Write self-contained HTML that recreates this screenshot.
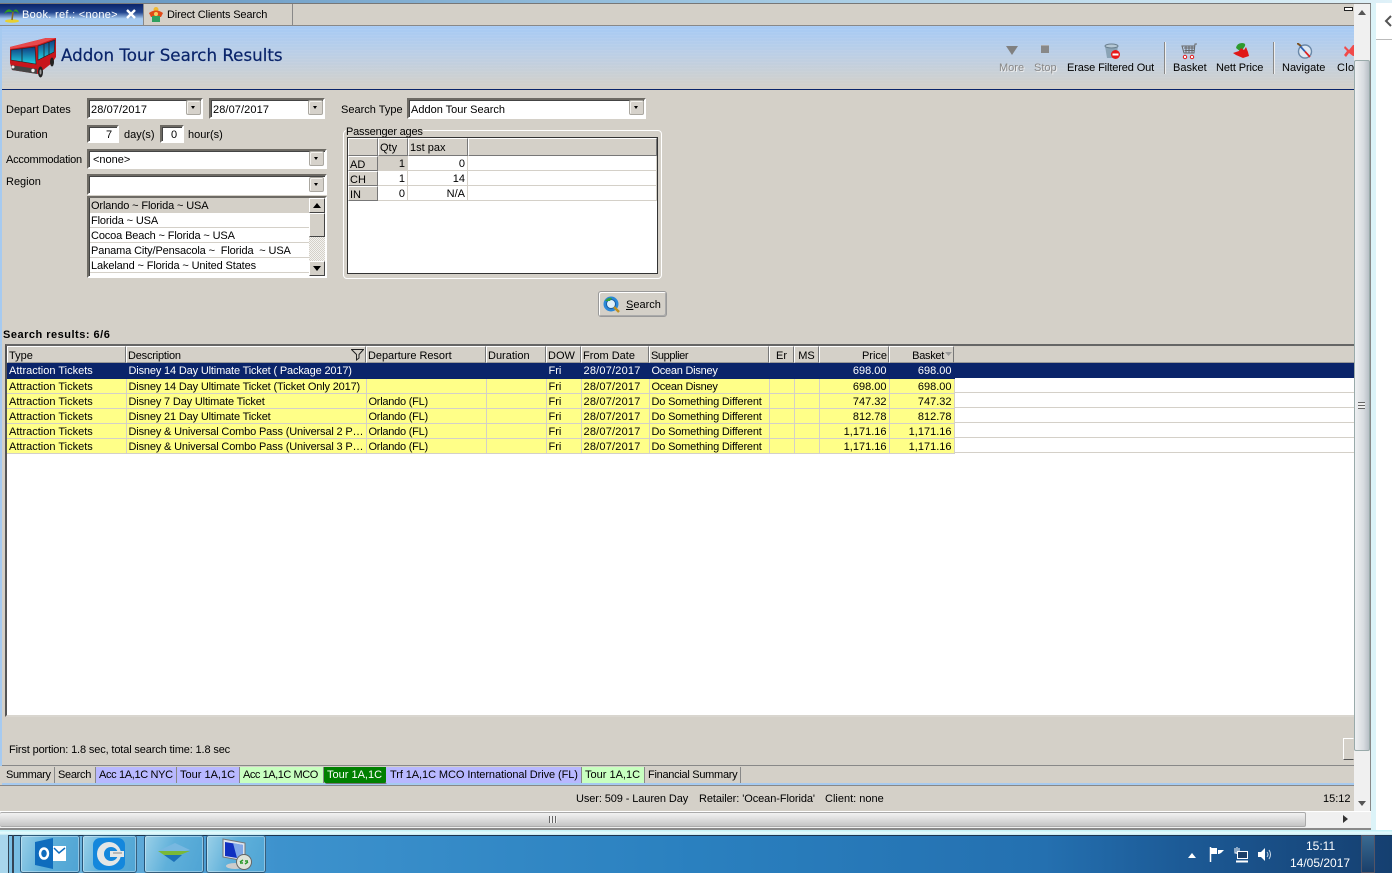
<!DOCTYPE html>
<html><head><meta charset="utf-8"><style>
html,body{margin:0;padding:0;width:1392px;height:873px;overflow:hidden;background:#fff}
*{box-sizing:border-box}
body{position:relative;font:11px/13px "Liberation Sans",sans-serif;color:#000}
.a{position:absolute}
.t{position:absolute;white-space:nowrap;font:11px/17px "Liberation Sans",sans-serif;color:#000}
.f{position:absolute;background:#fff;border:2px solid;border-color:#6d6a64 #fff #fff #6d6a64;box-shadow:inset 1px 1px 0 #444}
.b{position:absolute;width:15px;height:15px;background:#d6d2cb;border:1px solid #aaa7a0;border-radius:2px;box-shadow:inset 1px 1px 0 #f4f2ee}
.b:after{content:"";position:absolute;left:4px;top:5px;border:2.500px solid transparent;border-top:3px solid #000;border-bottom:0}
.g{color:#888;text-shadow:1px 1px 0 #eee}
table{border-collapse:collapse;table-layout:fixed;position:absolute}
td{padding:2px 2px 0;height:15px;border-right:1px solid #d4d0c8;border-bottom:1px solid #d4d0c8;white-space:nowrap;overflow:hidden;font:11px/12px "Liberation Sans",sans-serif;background:#ffff88}
td.r,.hc.r{text-align:right}
td.d{letter-spacing:-.16px}
td.o{letter-spacing:-.25px}
td.m{letter-spacing:.2px}
td.s1{letter-spacing:-.25px}
td.s2{letter-spacing:-.18px}
tr.s td{background:#0a246a;color:#fff;border-color:#0a246a;padding-top:3px;line-height:11px}
.hc{position:absolute;top:346px;height:17px;background:#d4d0c8;border:1px solid;border-color:#fff #777 #999 #fff;padding:3px 1px 0 1px;white-space:nowrap;line-height:13px;font-size:11px}
.ph{position:absolute;background:#d4d0c8;border:1px solid;border-color:#fff #777 #777 #fff;padding:2px 0 0 1px;line-height:13px}
.ph.h{padding-top:3px}
.pc{position:absolute;height:15px;background:#fff;border-right:1px solid #d4d0c8;border-bottom:1px solid #d4d0c8;text-align:right;padding-right:2px;line-height:16px}
.li{position:absolute;left:90px;width:219px;height:15px;border-bottom:1px solid #d4d0c8;padding-left:1px;line-height:16px;background:#fff;white-space:nowrap;overflow:hidden;letter-spacing:-.13px}
.tb{position:absolute;top:767px;height:16px;border-right:1px solid #888;padding:0 0 0 2px;line-height:16px;white-space:nowrap}
.sb{position:absolute;background:#d4d0c8;border:1px solid;border-color:#fff #444 #444 #fff;}
.tk{position:absolute;top:835px;height:38px;border:1px solid rgba(20,50,80,.7);border-radius:3px;box-shadow:inset 0 0 0 1px rgba(255,255,255,.35);background:linear-gradient(110deg,#9ad0e8,#5fb0da 45%,#4fa4d4)}
</style></head><body>

<!-- window chrome -->
<div class="a" style="left:0;top:0;width:1392px;height:3px;background:linear-gradient(90deg,#5d8fbd,#9cc4e0 50%,#dff1f8)"></div>
<div class="a" style="left:0;top:3px;width:1371px;height:1px;background:#777"></div>
<div class="a" style="left:1371px;top:3px;width:5px;height:830px;background:#dcf3f8"></div>
<div class="a" style="left:1376px;top:39px;width:16px;height:1px;background:#bbb"></div>
<svg class="a" style="left:1384px;top:14px" width="8" height="14"><path d="M7 2 L2 7 L7 12" fill="none" stroke="#555" stroke-width="2"/></svg>

<!-- main bg -->
<div class="a" style="left:0;top:4px;width:1354px;height:808px;background:#d4d0c8"></div>
<div class="a" style="left:0;top:26px;width:2px;height:740px;background:#a6caf0"></div>

<!-- tabs -->
<div class="a" style="left:0;top:4px;width:143px;height:21px;background:linear-gradient(180deg,#0a246a 0,#23468f 40%,#a6caf0 70%,#a6caf0 100%)"></div>
<div class="a" style="left:143px;top:4px;width:150px;height:22px;border:1px solid #888;border-top:0;border-bottom:0;background:#d4d0c8"></div>
<div class="a" style="left:0;top:25px;width:1354px;height:1px;background:#888"></div>
<div class="t" style="left:22px;top:7px;color:#fff;letter-spacing:.3px">Book. ref.: &lt;none&gt;</div>
<svg class="a" style="left:3px;top:6px" width="17" height="17"><ellipse cx="9" cy="15" rx="7" ry="1.8" fill="#e8d030"/><path d="M9 14 L10 6" stroke="#8a6a20" stroke-width="1.5"/><path d="M10 6 C6 1 3 4 1 8 C4 5 7 6 10 6 C12 2 15 3 16 8 C14 5 12 5 10 6" fill="#2f9a20"/></svg>
<svg class="a" style="left:126px;top:9px" width="10" height="10"><path d="M1 1 L9 9 M9 1 L1 9" stroke="#fff" stroke-width="2.4"/></svg>
<svg class="a" style="left:148px;top:6px" width="16" height="17"><circle cx="8" cy="3.5" r="2.5" fill="#f0b830"/><path d="M1 7 Q8 2 15 7 L13 11 H3 Z" fill="#e04a18"/><rect x="4" y="10" width="8" height="6" fill="#2fa060"/><circle cx="8" cy="8" r="2" fill="#f5d060"/></svg>
<div class="t" style="left:167px;top:7px;letter-spacing:-.15px">Direct Clients Search</div>
<div class="a" style="left:1344px;top:7px;width:9px;height:4px;border:1px solid #222;background:#fff"></div>

<!-- header -->
<div class="a" style="left:2px;top:26px;width:1352px;height:63px;background:repeating-linear-gradient(180deg,rgba(255,255,255,.05) 0 1px,rgba(0,0,0,0) 1px 3px),linear-gradient(180deg,#a6caf5 0,#bccfe6 45%,#d4d0c8 100%)"></div>
<div class="a" style="left:2px;top:89px;width:1352px;height:1px;background:#0a246a"></div>
<svg class="a" style="left:8px;top:37px" width="50" height="41" viewBox="0 0 50 41">
<defs><linearGradient id="w" x1="0" y1="0" x2="0" y2="1"><stop offset="0" stop-color="#103a80"/><stop offset="1" stop-color="#20d0e0"/></linearGradient></defs>
<path d="M2 10 L38 1 L48 1 L48 20 L44 26 L30 37 L4 33 L2 26 Z" fill="#c8161c"/>
<path d="M2 10 L38 1 L48 1 L29 8 L2 12 Z" fill="#e84a4c"/>
<path d="M3 13 L27 10 L28 27 L3 23 Z" fill="url(#w)" stroke="#222" stroke-width=".6"/>
<path d="M30 9 L47 3 L46 15 L30 23 Z" fill="url(#w)" stroke="#222" stroke-width=".6"/>
<path d="M14 11.500 V25 M36 7 V20 M41 5 V18" stroke="#222" stroke-width=".8"/>
<path d="M3 28 L29 32 L29 37 L4 33 Z" fill="#444"/>
<circle cx="5" cy="30" r="1.500" fill="#eee"/><circle cx="25" cy="33.500" r="1.700" fill="#eee"/>
<ellipse cx="32.500" cy="35" rx="2.500" ry="5.500" fill="#222"/><ellipse cx="32.500" cy="35" rx="1" ry="2.500" fill="#999"/>
<ellipse cx="44" cy="25" rx="2" ry="4.500" fill="#222"/>
</svg>
<div class="t" style="left:61px;top:45px;font:16.7px/21px 'DejaVu Sans',sans-serif;color:#0a246a;-webkit-text-stroke:.2px #0a246a">Addon Tour Search Results</div>

<!-- toolbar -->
<svg class="a" style="left:1006px;top:45px" width="12" height="11"><path d="M0 1 H12 L6 10 Z" fill="#808080"/></svg>
<div class="a" style="left:1041px;top:45px;width:8px;height:8px;background:#888;border-top:1px solid #aaa"></div>
<svg class="a" style="left:1104px;top:43px" width="18" height="17"><path d="M1 3 L3 15 H12 L14 3 Z" fill="#8aa3b5"/><ellipse cx="7.5" cy="3" rx="6.5" ry="2" fill="#b5c8d5" stroke="#6b8090"/><circle cx="11.5" cy="11.5" r="4.5" fill="#e81818"/><rect x="8.5" y="10.5" width="6" height="2" fill="#fff"/></svg>
<div class="t g" style="left:999px;top:60px">More</div>
<div class="t g" style="left:1034px;top:60px">Stop</div>
<div class="t" style="left:1067px;top:60px;letter-spacing:-.12px">Erase Filtered Out</div>
<div class="a" style="left:1164px;top:42px;width:2px;height:32px;background:#888;border-right:1px solid #eee"></div>
<svg class="a" style="left:1181px;top:43px" width="17" height="17"><path d="M16 1 H14 L13 10 H3 L1 3 H14 M3 5 H14 M3.5 7.5 H13 M5 3 V10 M8 3 V10 M11 3 V10" fill="none" stroke="#666"/><circle cx="4" cy="14" r="1.7" fill="#fff" stroke="#e01818"/><circle cx="11" cy="14" r="1.7" fill="#fff" stroke="#e01818"/></svg>
<div class="t" style="left:1173px;top:60px">Basket</div>
<svg class="a" style="left:1233px;top:43px" width="17" height="16"><path d="M3 5 Q4 0 9 0 Q13 0 12 3 L8 9 Z" fill="#2e9a2e"/><path d="M0 10 L6 8 L8 5 L11 7 L13 4 L15 9 L16 13 L10 15 L3 12 Z" fill="#e01818"/></svg>
<div class="t" style="left:1216px;top:60px;letter-spacing:-.1px">Nett Price</div>
<div class="a" style="left:1273px;top:42px;width:2px;height:32px;background:#888;border-right:1px solid #eee"></div>
<svg class="a" style="left:1297px;top:43px" width="16" height="17"><circle cx="8" cy="8.5" r="6.500" fill="#dfe8f2" stroke="#6a88a8" stroke-width="1.4"/><path d="M3 3 L8 8.500" stroke="#3060b0" stroke-width="1.700"/><path d="M8 8.500 L13 14" stroke="#e02020" stroke-width="1.700"/><path d="M0 0 L4 3" stroke="#7a5020" stroke-width="2"/></svg>
<div class="t" style="left:1282px;top:60px">Navigate</div>
<svg class="a" style="left:1344px;top:44px" width="10" height="14"><path d="M1 2 L5 6 L9 1 L10 1 V12 L9 12 L5 9 L2 13 L0 11 L3 7 L0 4 Z" fill="#f04a4a"/></svg>
<div class="t" style="left:1337px;top:60px;width:17px;overflow:hidden;letter-spacing:.3px">Close</div>

<!-- form -->
<div class="t" style="left:6px;top:102px">Depart Dates</div>
<div class="f" style="left:87px;top:98px;width:116px;height:21px"></div><div class="t" style="left:91px;top:102px;letter-spacing:.1px">28/07/2017</div><div class="b" style="left:186px;top:100px"></div>
<div class="f" style="left:209px;top:98px;width:116px;height:21px"></div><div class="t" style="left:213px;top:102px;letter-spacing:.1px">28/07/2017</div><div class="b" style="left:308px;top:100px"></div>
<div class="t" style="left:341px;top:102px">Search Type</div>
<div class="f" style="left:407px;top:98px;width:239px;height:21px"></div><div class="t" style="left:411px;top:102px">Addon Tour Search</div><div class="b" style="left:629px;top:100px"></div>

<div class="t" style="left:6px;top:127px">Duration</div>
<div class="f" style="left:87px;top:125px;width:32px;height:18px"></div><div class="t" style="left:106px;top:127px">7</div>
<div class="t" style="left:124px;top:127px">day(s)</div>
<div class="f" style="left:160px;top:125px;width:24px;height:18px"></div><div class="t" style="left:171px;top:127px">0</div>
<div class="t" style="left:188px;top:127px">hour(s)</div>

<div class="t" style="left:6px;top:152px;letter-spacing:-.23px">Accommodation</div>
<div class="f" style="left:87px;top:149px;width:240px;height:20px"></div><div class="t" style="left:93px;top:152px">&lt;none&gt;</div><div class="b" style="left:309px;top:151px"></div>
<div class="t" style="left:6px;top:174px">Region</div>
<div class="f" style="left:87px;top:174px;width:240px;height:21px"></div><div class="b" style="left:309px;top:177px"></div>

<div class="f" style="left:87px;top:196px;width:240px;height:82px"></div>
<div class="li" style="top:198px;background:#d4d0c8">Orlando ~ Florida ~ USA</div>
<div class="li" style="top:213px">Florida ~ USA</div>
<div class="li" style="top:228px">Cocoa Beach ~ Florida ~ USA</div>
<div class="li" style="top:243px">Panama City/Pensacola ~&nbsp; Florida&nbsp; ~ USA</div>
<div class="li" style="top:258px">Lakeland ~ Florida ~ United States</div>
<div class="li" style="top:273px;height:3px;border:0">Kissimmee ~ Florida ~ USA</div>
<div class="a" style="left:309px;top:198px;width:16px;height:78px;background:repeating-conic-gradient(#d4d0c8 0 25%,#f4f3f0 0 50%) 0 0/2px 2px"></div>
<div class="sb" style="left:309px;top:198px;width:16px;height:15px"></div>
<svg class="a" style="left:313px;top:203px" width="9" height="5"><path d="M0 5 H8 L4 0 Z"/></svg>
<div class="sb" style="left:309px;top:213px;width:16px;height:24px"></div>
<div class="sb" style="left:309px;top:261px;width:16px;height:15px"></div>
<svg class="a" style="left:313px;top:266px" width="9" height="5"><path d="M0 0 H8 L4 5 Z"/></svg>

<!-- passenger group -->
<div class="a" style="left:343px;top:130px;width:319px;height:149px;border:1px solid #fff;border-radius:4px"></div>
<div class="t" style="left:346px;top:124px;background:#d4d0c8;height:13px;line-height:17px;overflow:hidden;letter-spacing:-.2px">Passenger ages</div>
<div class="a" style="left:347px;top:137px;width:311px;height:137px;background:#fff;border:1px solid #333"></div>
<div class="a" style="left:348px;top:138px;width:309px;height:18px;background:#d4d0c8"></div>
<div class="ph" style="left:348px;top:138px;width:30px;height:18px"></div>
<div class="ph h" style="left:378px;top:138px;width:30px;height:18px">Qty</div>
<div class="ph h" style="left:408px;top:138px;width:60px;height:18px">1st pax</div>
<div class="ph" style="left:468px;top:138px;width:189px;height:18px"></div>
<div class="ph" style="left:348px;top:156px;width:30px;height:15px">AD</div>
<div class="ph" style="left:348px;top:171px;width:30px;height:15px">CH</div>
<div class="ph" style="left:348px;top:186px;width:30px;height:15px">IN</div>
<div class="pc" style="left:378px;top:156px;width:30px;background:#d4d0c8">1</div>
<div class="pc" style="left:408px;top:156px;width:60px">0</div>
<div class="pc" style="left:468px;top:156px;width:189px"></div>
<div class="pc" style="left:378px;top:171px;width:30px">1</div>
<div class="pc" style="left:408px;top:171px;width:60px">14</div>
<div class="pc" style="left:468px;top:171px;width:189px"></div>
<div class="pc" style="left:378px;top:186px;width:30px">0</div>
<div class="pc" style="left:408px;top:186px;width:60px">N/A</div>
<div class="pc" style="left:468px;top:186px;width:189px"></div>

<!-- search button -->
<div class="a" style="left:598px;top:291px;width:69px;height:26px;background:#d4d0c8;border:1px solid #999;border-radius:3px;box-shadow:inset 1px 1px 0 #fff,inset -1px -1px 0 #aaa"></div>
<svg class="a" style="left:603px;top:296px" width="19" height="18"><circle cx="8" cy="8" r="7.5" fill="#2a88d8"/><circle cx="8" cy="8" r="4.5" fill="#dff0fa" stroke="#1a5aa0"/><path d="M11 11 L16 16" stroke="#c09020" stroke-width="2.5"/><path d="M2 5 Q5 1 9 2 L7 5 Z" fill="#30a040"/></svg>
<div class="t" style="left:626px;top:297px"><u>S</u>earch</div>

<!-- results -->
<div class="t" style="left:3px;top:327px;font-weight:bold;letter-spacing:.5px">Search results: 6/6</div>
<div class="a" style="left:5px;top:344px;width:1349px;height:373px;background:#fff;border-left:2px solid #555;border-top:2px solid #666;border-bottom:2px solid #d9d6cf"></div>
<div class="a" style="left:7px;top:346px;width:1347px;height:17px;background:#d4d0c8;border-bottom:1px solid #999"></div>
<div class="hc" style="left:7px;width:119px">Type</div>
<div class="hc" style="left:126px;width:240px;letter-spacing:-.2px">Description</div>
<svg class="a" style="left:351px;top:349px" width="13" height="12"><path d="M.5 .5 H12.5 L8 5.5 V9 L5.5 11 V5.5 Z" fill="none" stroke="#222"/></svg>
<div class="hc" style="left:366px;width:120px;padding-left:1px;letter-spacing:-.05px">Departure Resort</div>
<div class="hc" style="left:486px;width:60px">Duration</div>
<div class="hc" style="left:546px;width:35px">DOW</div>
<div class="hc" style="left:581px;width:68px">From Date</div>
<div class="hc" style="left:649px;width:120px;padding-left:1px;letter-spacing:-.4px">Supplier</div>
<div class="hc" style="left:769px;width:25px;text-align:center">Er</div>
<div class="hc" style="left:794px;width:25px;text-align:center">MS</div>
<div class="hc r" style="left:819px;width:70px">Price</div>
<div class="hc" style="left:889px;width:65px;text-align:right;padding-right:9px;letter-spacing:-.3px">Basket</div>
<svg class="a" style="left:945px;top:352px" width="7" height="4"><path d="M0 0 H7 L3.5 4 Z" fill="#999"/></svg>

<table style="left:7px;top:363px;width:947px">
<colgroup><col style="width:119px"><col style="width:240px"><col style="width:120px"><col style="width:60px"><col style="width:35px"><col style="width:68px"><col style="width:120px"><col style="width:25px"><col style="width:25px"><col style="width:70px"><col style="width:65px"></colgroup>
<tr class="s"><td>Attraction Tickets</td><td class="d">Disney 14 Day Ultimate Ticket ( Package 2017)</td><td></td><td></td><td>Fri</td><td class="m">28/07/2017</td><td class="s1">Ocean Disney</td><td></td><td></td><td class="r">698.00</td><td class="r">698.00</td></tr>
<tr><td>Attraction Tickets</td><td class="d">Disney 14 Day Ultimate Ticket (Ticket Only 2017)</td><td></td><td></td><td>Fri</td><td class="m">28/07/2017</td><td class="s1">Ocean Disney</td><td></td><td></td><td class="r">698.00</td><td class="r">698.00</td></tr>
<tr><td>Attraction Tickets</td><td class="d">Disney 7 Day Ultimate Ticket</td><td class="o">Orlando (FL)</td><td></td><td>Fri</td><td class="m">28/07/2017</td><td class="s2">Do Something Different</td><td></td><td></td><td class="r">747.32</td><td class="r">747.32</td></tr>
<tr><td>Attraction Tickets</td><td class="d">Disney 21 Day Ultimate Ticket</td><td class="o">Orlando (FL)</td><td></td><td>Fri</td><td class="m">28/07/2017</td><td class="s2">Do Something Different</td><td></td><td></td><td class="r">812.78</td><td class="r">812.78</td></tr>
<tr><td>Attraction Tickets</td><td class="d">Disney &amp; Universal Combo Pass (Universal 2 P…</td><td class="o">Orlando (FL)</td><td></td><td>Fri</td><td class="m">28/07/2017</td><td class="s2">Do Something Different</td><td></td><td></td><td class="r">1,171.16</td><td class="r">1,171.16</td></tr>
<tr><td>Attraction Tickets</td><td class="d">Disney &amp; Universal Combo Pass (Universal 3 P…</td><td class="o">Orlando (FL)</td><td></td><td>Fri</td><td class="m">28/07/2017</td><td class="s2">Do Something Different</td><td></td><td></td><td class="r">1,171.16</td><td class="r">1,171.16</td></tr>
</table>
<div class="a" style="left:954px;top:363px;width:400px;height:15px;background:#0a246a"></div>
<div class="a" style="left:954px;top:378px;width:400px;height:76px;background:repeating-linear-gradient(180deg,transparent 0 14px,#d4d0c8 14px 15px)"></div>

<div class="t" style="left:9px;top:742px;letter-spacing:-.14px">First portion: 1.8 sec, total search time: 1.8 sec</div>
<div class="a" style="left:1343px;top:738px;width:11px;height:22px;background:#d4d0c8;border:1px solid;border-color:#fff #d4d0c8 #555 #fff"></div>

<!-- bottom tabs -->
<div class="a" style="left:2px;top:765px;width:1352px;height:1px;background:#888"></div>
<div class="a" style="left:2px;top:783px;width:1352px;height:2px;background:#a6caf0"></div>
<div class="a" style="left:0;top:785px;width:1354px;height:1px;background:#888"></div>
<div class="tb" style="left:3px;width:52px;padding-left:3px;letter-spacing:-.35px">Summary</div>
<div class="tb" style="left:55px;width:41px;padding-left:3px;letter-spacing:-.3px">Search</div>
<div class="tb" style="left:96px;width:81px;background:#b8b8ff;padding-left:3px;letter-spacing:-.35px">Acc 1A,1C NYC</div>
<div class="tb" style="left:177px;width:63px;background:#b8b8ff;padding-left:3px">Tour 1A,1C</div>
<div class="tb" style="left:240px;width:84px;background:#c8ffc0;padding-left:3px;letter-spacing:-.45px">Acc 1A,1C MCO</div>
<div class="tb" style="left:324px;width:62px;background:#008000;color:#fff;border:0;border-radius:0 0 2px 2px;box-shadow:1px 1px 0 #777;padding-left:3px">Tour 1A,1C</div>
<div class="tb" style="left:386px;width:196px;background:#b8b8ff;padding-left:4px;letter-spacing:-.08px">Trf 1A,1C MCO International Drive (FL)</div>
<div class="tb" style="left:582px;width:63px;background:#c8ffc0;padding-left:3px">Tour 1A,1C</div>
<div class="tb" style="left:645px;width:96px;padding-left:3px;letter-spacing:-.28px">Financial Summary</div>

<!-- status -->
<div class="t" style="left:576px;top:791px;letter-spacing:-.1px">User: 509 - Lauren Day</div>
<div class="t" style="left:699px;top:791px;letter-spacing:-.08px">Retailer: 'Ocean-Florida'</div>
<div class="t" style="left:825px;top:791px">Client: none</div>
<div class="t" style="left:1323px;top:791px">15:12</div>

<!-- vertical scrollbar -->
<div class="a" style="left:1354px;top:4px;width:16px;height:808px;background:#f0f0f0"></div>
<div class="a" style="left:1370px;top:4px;width:1px;height:826px;background:#888"></div>
<svg class="a" style="left:1358px;top:10px" width="9" height="5"><path d="M0 5 H8 L4 0 Z" fill="#555"/></svg>
<div class="a" style="left:1354px;top:60px;width:16px;height:691px;border:1px solid #9aa;border-radius:2px;background:linear-gradient(90deg,#eef0f2,#d8dce0 60%,#b8bfc6)"></div>
<div class="a" style="left:1358px;top:402px;width:7px;height:7px;background:repeating-linear-gradient(180deg,#666 0 1px,#eee 1px 3px)"></div>
<svg class="a" style="left:1358px;top:801px" width="9" height="5"><path d="M0 0 H8 L4 5 Z" fill="#555"/></svg>

<!-- horizontal scrollbar -->
<div class="a" style="left:0;top:811px;width:1371px;height:1px;background:#fff"></div>
<div class="a" style="left:0;top:812px;width:1371px;height:17px;background:#f0f0f0"></div>
<div class="a" style="left:0;top:812px;width:1306px;height:15px;background:linear-gradient(180deg,#f2f2f2,#dcdcdc 50%,#c4c4c4);border:1px solid #aaa;border-left:0;border-radius:2px"></div>
<div class="a" style="left:549px;top:816px;width:8px;height:7px;background:repeating-linear-gradient(90deg,#666 0 1px,#eee 1px 3px)"></div>
<svg class="a" style="left:1343px;top:815px" width="5" height="9"><path d="M0 0 V8 L5 4 Z" fill="#333"/></svg>
<div class="a" style="left:0;top:828px;width:1371px;height:2px;background:#8a8a8a"></div>

<!-- taskbar -->
<div class="a" style="left:0;top:830px;width:1392px;height:5px;background:linear-gradient(180deg,#bff0f6,#e8fbfd 60%,#bfe6f0)"></div>
<div class="a" style="left:0;top:835px;width:1392px;height:38px;background:linear-gradient(90deg,#7cc0e4 0,#3d92cd 20%,#2a80bf 50%,#2470b0 75%,#1c5a96 85%,#153f70 100%);border-top:1px solid #1a3350"></div>
<div class="a" style="left:0;top:835px;width:9px;height:38px;border-right:1px solid #345;background:#a8d6ec"></div>
<div class="a" style="left:12px;top:835px;width:2px;height:38px;background:#345"></div>
<div class="tk" style="left:20px;width:60px"></div>
<div class="tk" style="left:82px;width:55px"></div>
<div class="tk" style="left:144px;width:60px"></div>
<div class="tk" style="left:206px;width:60px"></div>
<svg class="a" style="left:35px;top:838px" width="31" height="32"><path d="M0 4 L18 0 V31 L0 27 Z" fill="#0f6cbd"/><rect x="18" y="8" width="13" height="15" fill="#fff"/><path d="M19 10 L24 15 L30 10" fill="none" stroke="#0f6cbd" stroke-width="1.5"/><ellipse cx="9" cy="15.5" rx="4" ry="5" fill="none" stroke="#fff" stroke-width="2.5"/></svg>
<svg class="a" style="left:93px;top:838px" width="32" height="32"><rect width="32" height="32" rx="7" fill="#1487dc"/><circle cx="16" cy="16" r="12" fill="#e4e6e6"/><circle cx="18" cy="16" r="7" fill="#1487dc"/><rect x="17" y="13" width="14" height="6" fill="#e4e6e6"/><rect x="20" y="14.500" width="9" height="1" fill="#888"/></svg>
<svg class="a" style="left:158px;top:843px" width="34" height="20"><path d="M2 7 L17 0 L32 7 L17 10 Z" fill="#78b8e0"/><path d="M0 8 H32 L22 12 H6 Z" fill="#7ab838"/><path d="M6 12 H24 L16 19 Z" fill="#1c70b8"/></svg>
<svg class="a" style="left:221px;top:838px" width="32" height="33"><path d="M2 1 L24 5 V23 L2 19 Z" fill="#dde4ee" stroke="#777"/><path d="M4 4 L22 7 V21 L4 18 Z" fill="#1030c0"/><path d="M12 5 L22 7 V21 L16 20 Z" fill="#80a8e8"/><ellipse cx="14" cy="28" rx="9" ry="3" fill="#ccc"/><circle cx="23" cy="24" r="7.500" fill="#dfe4da" stroke="#666"/><path d="M19 24 L22 22 M27 24 L24 26 M19 25 H22 M24 23 H27" stroke="#2a9a2a" stroke-width="1.5"/></svg>
<svg class="a" style="left:1188px;top:853px" width="9" height="5"><path d="M0 5 H8 L4 0 Z" fill="#fff"/></svg>
<svg class="a" style="left:1209px;top:847px" width="16" height="16"><path d="M1.500 0 V15" stroke="#fff" stroke-width="1.500"/><path d="M2 1 H8 V7 H2 Z M9 3 H15 L12 6 L10 7 H9 Z" fill="#fff"/></svg>
<svg class="a" style="left:1233px;top:847px" width="16" height="16"><path d="M4 0 V7 M2 1 V6 H6 V1" fill="none" stroke="#fff"/><rect x="4.500" y="4.500" width="10" height="7" fill="#1c3f68" stroke="#fff"/><path d="M3 14.500 H15" stroke="#fff" stroke-width="2"/></svg>
<svg class="a" style="left:1257px;top:847px" width="16" height="16"><path d="M1 5 H4 L8 1 V14 L4 10 H1 Z" fill="#fff"/><path d="M10 5 Q12 7.500 10 10 M12 3 Q15 7.500 12 12" fill="none" stroke="#c8d8e8"/></svg>
<div class="t" style="left:1306px;top:838px;color:#fff;font-size:12px">15:11</div>
<div class="t" style="left:1290px;top:855px;color:#fff;font-size:12px">14/05/2017</div>
<div class="a" style="left:1361px;top:835px;width:14px;height:38px;border:1px solid #556;background:linear-gradient(180deg,#3a6a90,#1a3f6a)"></div>
</body></html>
